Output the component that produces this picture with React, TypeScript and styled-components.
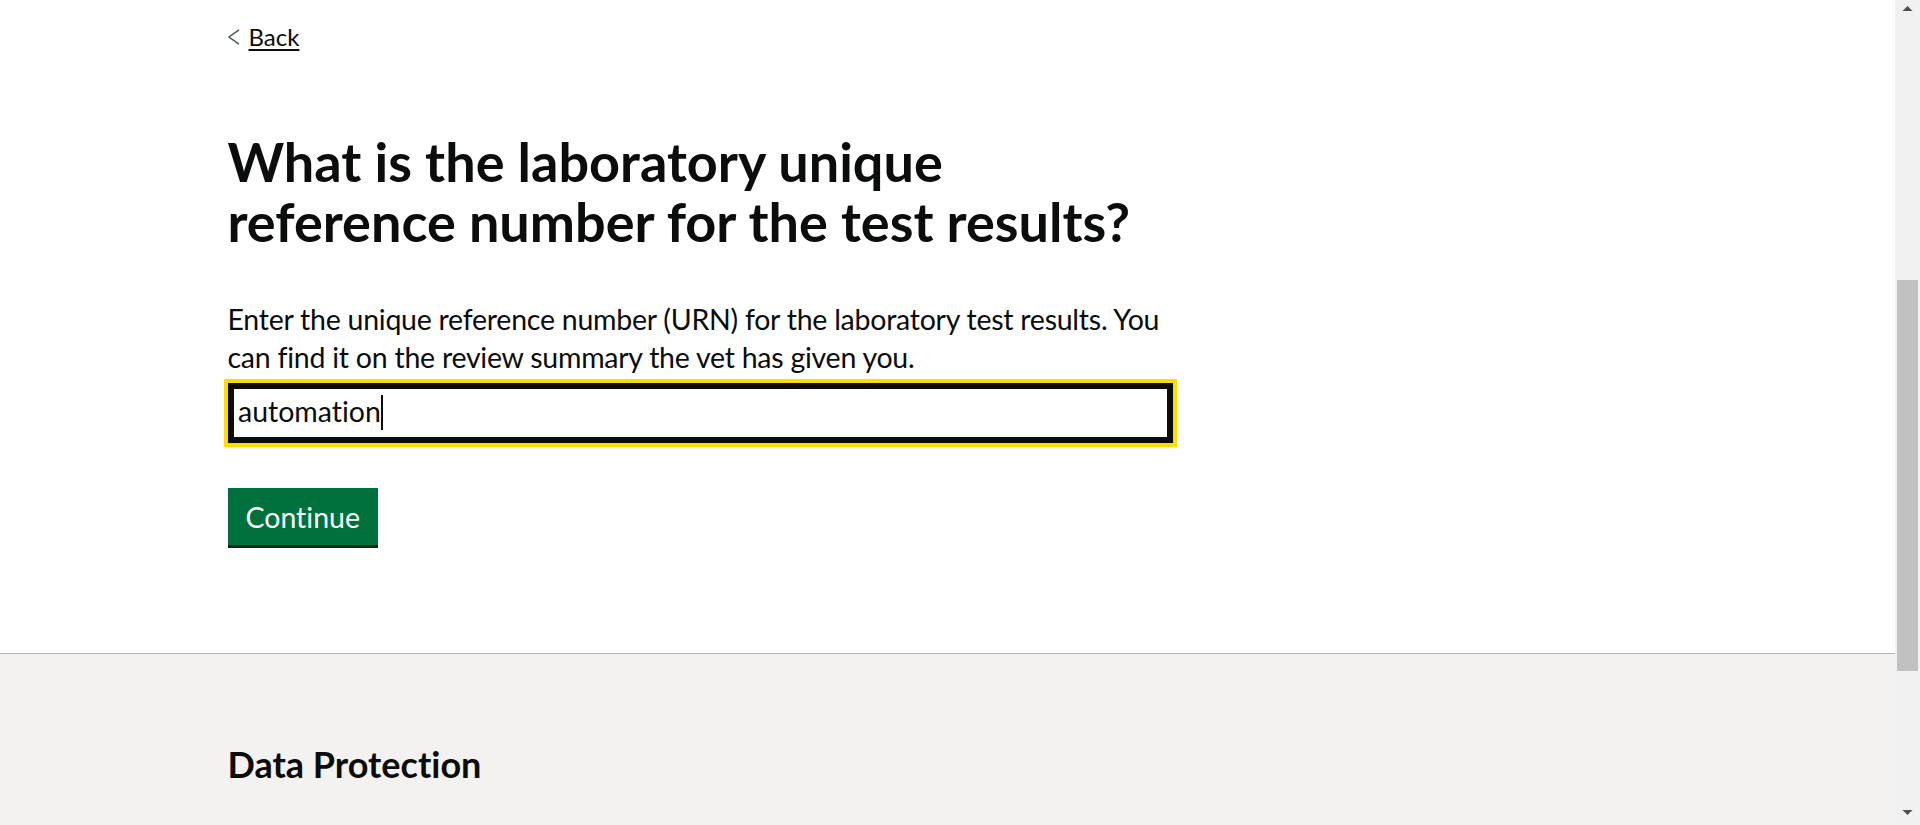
import React, { useLayoutEffect, useState } from "react";
import styled, { createGlobalStyle } from "styled-components";

const FONT = `Lato, "Noto Sans", Arial, sans-serif`;

const GlobalStyle = createGlobalStyle`
  html, body {
    margin: 0;
    height: 100%;
    overflow: hidden;
    background: #ffffff;
  }
  body {
    color: #0b0c0c;
    font-family: ${FONT};
    font-variant-ligatures: none;
    -webkit-font-smoothing: antialiased;
  }
  *, *::before, *::after {
    box-sizing: border-box;
  }
`;

const Viewport = styled.div`
  display: flex;
  height: 100vh;
  overflow: hidden;
`;

const Document = styled.div`
  flex: 1;
  min-width: 0;
  overflow: hidden;
  display: flex;
  flex-direction: column;
  background: #ffffff;
`;

const ScrollRail = styled.div`
  flex: none;
  width: 25px;
  display: flex;
  flex-direction: column;
  background: #f1f1f1;
`;

const ScrollArrow = styled.svg`
  display: block;
  width: 25px;
  height: 20px;
  flex: none;
`;

const ScrollTrack = styled.div`
  flex: 1;
  padding: 260px 2px 0;
`;

const ScrollThumb = styled.div`
  height: 391px;
  background: #c1c1c1;
`;

const MainArea = styled.div`
  background: #ffffff;
`;

const WidthContainer = styled.div`
  max-width: 1440px;
  margin: 0 auto;
`;

const BackLink = styled.a`
  display: flex;
  align-items: center;
  width: fit-content;
  margin-top: 22px;
  font-size: 24px;
  line-height: 30px;
  color: #0b0c0c;
  text-decoration: none;
  cursor: pointer;
`;

const BackChevron = styled.svg`
  width: 12px;
  height: 16px;
  margin-right: 9px;
  flex: none;
`;

const BackText = styled.span`
  text-decoration: underline;
  text-decoration-thickness: 1.5px;
  text-underline-offset: 2.5px;
`;

const Main = styled.main`
  padding: 80px 0 108px;
`;

const Column = styled.div`
  width: 945px;
`;

const Heading = styled.h1`
  margin: 0 0 49px;
  font-size: 54px;
  line-height: 60px;
  font-weight: 700;
`;

const Hint = styled.p`
  margin: 0 0 7px;
  font-size: 28.5px;
  line-height: 37.5px;
  font-weight: 400;
  letter-spacing: -0.25px;
`;

const FormGroup = styled.div`
  margin-bottom: 45px;
`;

const InputWrap = styled.div`
  position: relative;
  width: 945px;
`;

const TextInput = styled.input`
  display: block;
  width: 945px;
  height: 60px;
  margin: 0;
  padding: 5.5px 7.5px 9.5px;
  border: 3px solid #0b0c0c;
  border-radius: 0;
  box-shadow: inset 0 0 0 3px #0b0c0c;
  outline: 4px solid #ffdd00;
  outline-offset: 0;
  font-family: ${FONT};
  font-variant-ligatures: none;
  font-size: 28.5px;
  line-height: 1.25;
  color: #0b0c0c;
  caret-color: transparent;
  background: #ffffff;
`;

const Caret = styled.span`
  position: absolute;
  top: 12px;
  width: 1.5px;
  height: 35px;
  background: #0b0c0c;
  pointer-events: none;
`;

const PrimaryButton = styled.button`
  display: block;
  margin: 0;
  padding: 12px 15px 10.5px;
  border: 3px solid transparent;
  border-radius: 0;
  background: #00703c;
  box-shadow: 0 3px 0 #002d18;
  color: #ffffff;
  font-family: ${FONT};
  font-variant-ligatures: none;
  font-size: 28.5px;
  line-height: 1;
  font-weight: 400;
  cursor: pointer;
`;

const Footer = styled.footer`
  flex: none;
  height: 455px;
  border-top: 1px solid #b1b4b6;
  background: #f3f2f1;
  padding-top: 88px;
`;

const FooterHeading = styled.h2`
  margin: 0;
  font-size: 36px;
  line-height: 45px;
  font-weight: 700;
  color: #0b0c0c;
`;

const INPUT_VALUE = "automation";

export default function App() {
  const [caretLeft, setCaretLeft] = useState(3 + 7.5 + 141);

  useLayoutEffect(() => {
    const canvas = document.createElement("canvas");
    const ctx = canvas.getContext("2d");
    if (ctx) {
      ctx.font = `28.5px ${FONT}`;
      const w = ctx.measureText(INPUT_VALUE).width;
      setCaretLeft(3 + 7.5 + w);
    }
  }, []);

  return (
    <>
      <GlobalStyle />
      <Viewport>
        <Document>
          <MainArea>
            <WidthContainer>
              <BackLink href="#">
                <BackChevron viewBox="0 0 12 16" aria-hidden="true">
                  <polyline
                    points="11,0.8 1,8 11,15.2"
                    fill="none"
                    stroke="#505a5f"
                    strokeWidth="1.5"
                  />
                </BackChevron>
                <BackText>Back</BackText>
              </BackLink>
              <Main>
                <Column>
                  <Heading>
                    What is the laboratory unique reference number for the test
                    results?
                  </Heading>
                  <Hint>
                    Enter the unique reference number (URN) for the laboratory
                    test results. You can find it on the review summary the vet
                    has given you.
                  </Hint>
                  <FormGroup>
                    <InputWrap>
                      <TextInput
                        type="text"
                        defaultValue={INPUT_VALUE}
                        aria-label="Laboratory unique reference number"
                      />
                      <Caret style={{ left: caretLeft }} />
                    </InputWrap>
                  </FormGroup>
                  <PrimaryButton type="button">Continue</PrimaryButton>
                </Column>
              </Main>
            </WidthContainer>
          </MainArea>
          <Footer>
            <WidthContainer>
              <FooterHeading>Data Protection</FooterHeading>
            </WidthContainer>
          </Footer>
        </Document>
        <ScrollRail aria-hidden="true">
          <ScrollArrow viewBox="0 0 25 20">
            <polygon points="7.5,11 12.5,6 17.5,11" fill="#505050" />
          </ScrollArrow>
          <ScrollTrack>
            <ScrollThumb />
          </ScrollTrack>
          <ScrollArrow viewBox="0 0 25 20">
            <polygon points="7.5,5 12.5,10 17.5,5" fill="#505050" />
          </ScrollArrow>
        </ScrollRail>
      </Viewport>
    </>
  );
}
